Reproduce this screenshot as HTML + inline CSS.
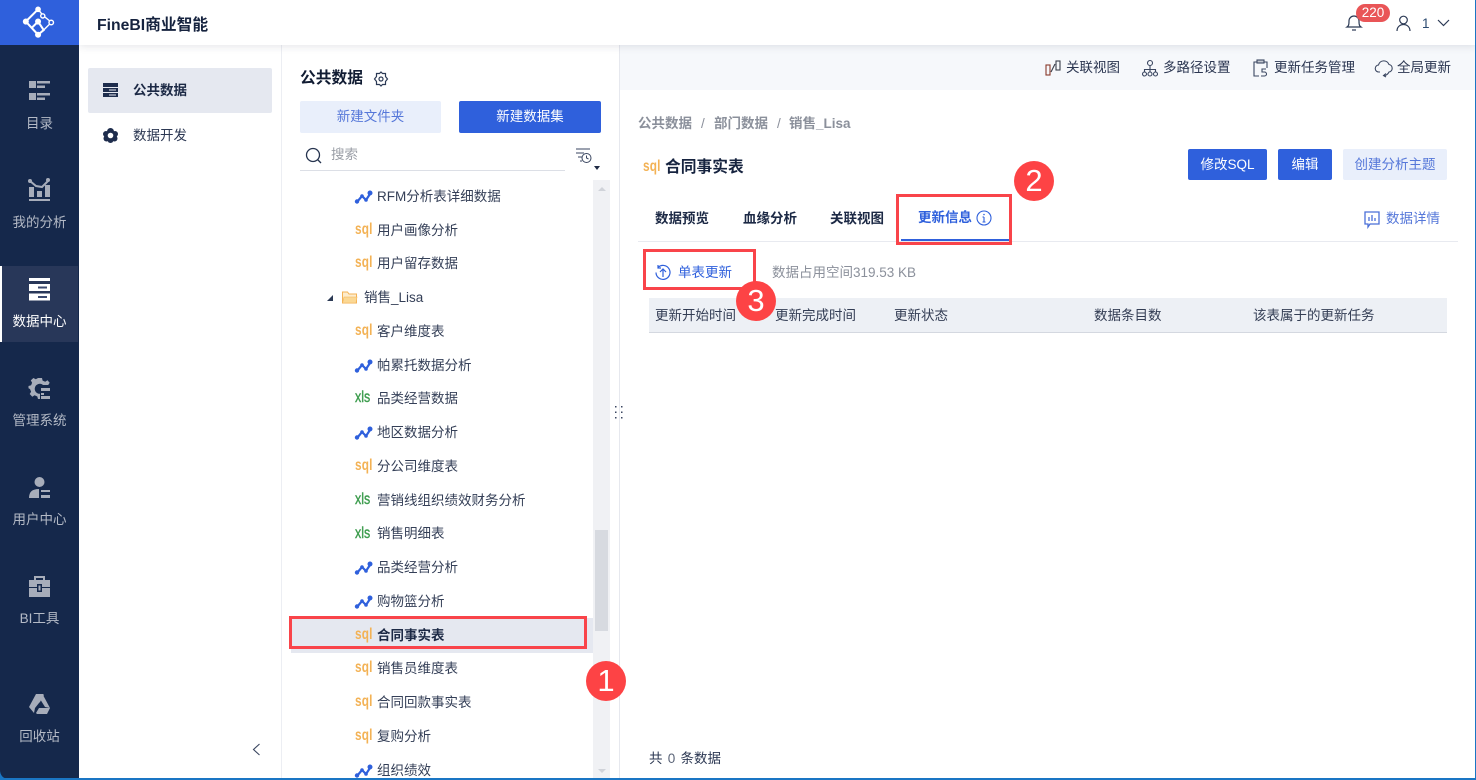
<!DOCTYPE html>
<html><head><meta charset="utf-8"><style>
*{box-sizing:border-box}
html,body{margin:0;padding:0;width:1476px;height:780px;overflow:hidden;background:#fff}
body{position:relative;font-family:"Liberation Sans","Noto Sans CJK SC",sans-serif;font-size:13.5px;color:#1f2a44}
.a{position:absolute}
.t{position:absolute;line-height:20px;height:20px;white-space:nowrap;margin-top:1px}
.b{font-weight:700}
.side{color:#b4bac6;width:79px;left:0;text-align:center}
.i{position:absolute;overflow:visible}
.sq,.xl{position:absolute;left:355px;height:14px;line-height:14px;font-weight:700;font-size:16px;white-space:nowrap;transform-origin:0 50%;margin-top:0}
.sq{color:#f3b255;transform:scaleX(.74);letter-spacing:.2px}
.xl{color:#3c9c4d;transform:scaleX(.8);font-weight:400;font-size:15.5px;-webkit-text-stroke:.4px #3c9c4d}
.row{position:absolute;left:377px;line-height:20px;height:20px;white-space:nowrap;color:#343f57;margin-top:1px}
.dot{position:absolute;width:40px;height:40px;border-radius:50%;background:#fd4345;color:#fff;font-size:31px;line-height:40px;text-align:center}
.box{position:absolute;border:3px solid #f9444a}
.btn{position:absolute;border-radius:2px;text-align:center;color:#fff;background:#2f60dc}
.lt{background:#e9effb;color:#5577d9}
</style></head><body>

<div class="a" style="left:79px;top:0;width:1397px;height:45px;background:#fff;box-shadow:0 1px 8px rgba(30,40,70,.13);z-index:3"></div>
<div class="a" style="left:0;top:0;width:79px;height:780px;background:#15284b;z-index:4"></div>
<div class="a" style="left:0;top:0;width:79px;height:45px;background:#2f60dc;z-index:5"></div>

<svg class="i" style="left:23px;top:6px;z-index:6" width="32" height="33" viewBox="0 0 34 34">
<path d="M16 3L3 16 16 30M16 16L9 23M16 16l6 9-6 5" fill="none" stroke="#fff" stroke-width="2.200"/>
<circle cx="16" cy="3" r="3" fill="#fff"/><circle cx="3" cy="16" r="3.200" fill="#fff"/><circle cx="16" cy="30" r="3.200" fill="#fff"/><circle cx="16" cy="16" r="3.200" fill="#fff"/>
<circle cx="21" cy="10" r="2.200" fill="#2f60dc" stroke="#fff" stroke-width="1.500"/><circle cx="30" cy="17" r="2.400" fill="#2f60dc" stroke="#fff" stroke-width="1.500"/><path d="M17 4l3 4M23 11l5 4M28 19l-6 6" stroke="#fff" stroke-width="1.500"/>
</svg>

<div style="position:absolute;left:0;top:0;width:79px;height:780px;z-index:6">
<div class="a" style="left:0;top:266px;width:78px;height:76px;background:#283759"></div>
<div class="a" style="left:0;top:266px;width:2px;height:76px;background:#fff"></div>

<svg class="i" style="left:28px;top:80px" width="23" height="22" viewBox="0 0 23 22" fill="#a7adba"><rect x="1" y="1" width="7" height="7"/><rect x="1" y="13" width="7" height="7"/><rect x="9" y="1" width="13" height="2.500"/><rect x="9" y="5.500" width="8" height="2.500"/><rect x="9" y="13" width="13" height="2.500"/><rect x="9" y="17.500" width="8" height="2.500"/></svg>
<div class="t side" style="top:113px">目录</div>

<svg class="i" style="left:28px;top:178px" width="23" height="24" viewBox="0 0 23 24" fill="#a7adba"><path d="M2 3l6 5 6 1 7-7" fill="none" stroke="#a7adba" stroke-width="2"/><circle cx="2" cy="3" r="2"/><circle cx="20" cy="2" r="2"/><rect x="1" y="9" width="5" height="10"/><rect x="9" y="13" width="5" height="6"/><rect x="17" y="7" width="5" height="12"/><rect x="1" y="21" width="21" height="2"/></svg>
<div class="t side" style="top:212px">我的分析</div>

<svg class="i" style="left:28px;top:277px" width="23" height="24" viewBox="0 0 23 24"><rect x="1" y="1" width="21" height="3" fill="#fff"/><rect x="1" y="7" width="21" height="7" fill="#fff"/><rect x="1" y="16.500" width="21" height="7" fill="#fff"/><rect x="10" y="9.500" width="9" height="2" fill="#3b4a70"/><rect x="10" y="19" width="9" height="2" fill="#3b4a70"/></svg>
<div class="t side" style="top:311px;color:#fff">数据中心</div>

<svg class="i" style="left:28px;top:377px" width="23" height="23" viewBox="0 0 23 23" fill="#a7adba"><path d="M10 1h4l.6 2.600 2.600 1.100 2.300-1.400 2.200 2.500-1.500 2.200H15a5 5 0 1 0-3 8.800V22h-2l-.7-2.500-2.700-1.200-2.300 1.400-2.600-2.700 1.400-2.300L2 12 .5 11.200 .5 9l2.600-.7 1-2.500-1.300-2.400L5.400 1l2.400 1.300z"/><rect x="13" y="11" width="9" height="3"/><rect x="13" y="16" width="3" height="2"/><rect x="13" y="19" width="9" height="3"/></svg>
<div class="t side" style="top:410px">管理系统</div>

<svg class="i" style="left:28px;top:476px" width="23" height="23" viewBox="0 0 23 23" fill="#a7adba"><circle cx="11.500" cy="6" r="5"/><path d="M1 22c0-6 3-9 10-9v9z"/><rect x="13" y="14" width="9" height="2"/><rect x="13" y="19" width="9" height="3"/></svg>
<div class="t side" style="top:509px">用户中心</div>

<svg class="i" style="left:28px;top:575px" width="23" height="23" viewBox="0 0 23 23" fill="#a7adba"><path d="M7 5V2h9v3" fill="none" stroke="#a7adba" stroke-width="2"/><rect x="1" y="5" width="21" height="7"/><rect x="1" y="13" width="21" height="9"/><rect x="9" y="9" width="5" height="8" fill="#15284b"/><rect x="10.500" y="10.500" width="2" height="5" fill="#a7adba"/></svg>
<div class="t side" style="top:608px">BI工具</div>

<svg class="i" style="left:28px;top:693px" width="23" height="22" viewBox="0 0 23 22" fill="#a7adba"><path d="M8 1h7l1 1-4 7-1 1-4 5-1 5-5-6z"/><path d="M15 2l7 13-5-1-5-8z"/><path d="M8 20l3-5h11l-3 6H9z"/></svg>
<div class="t side" style="top:726px">回收站</div>
</div>

<div class="t b" style="left:97px;top:15px;font-size:15.75px;height:20px;color:#16233f;z-index:6">FineBI商业智能</div>

<svg class="i" style="left:1345px;top:14px;z-index:6" width="18" height="18" viewBox="0 0 18 18"><path d="M2 13c1.500-1 2-2 2-6a5 5 0 0 1 10 0c0 4 .5 5 2 6z" fill="none" stroke="#2c3a55" stroke-width="1.200"/><path d="M7 16h4" stroke="#2c3a55" stroke-width="1.200"/></svg>
<div class="a" style="left:1356px;top:4px;width:34px;height:18px;border-radius:9px;background:#e95557;color:#fff;line-height:17px;text-align:center;font-size:13.5px;z-index:7">220</div>
<svg class="i" style="left:1396px;top:15px;z-index:6" width="15" height="17" viewBox="0 0 15 17" fill="none" stroke="#2c3a55" stroke-width="1.200"><circle cx="7.500" cy="5" r="3.800"/><path d="M1 16c0-4 3-6.500 6.500-6.500S14 12 14 16"/></svg>
<div class="t" style="left:1422px;top:13px;color:#2c4a70;z-index:6">1</div>
<svg class="i" style="left:1437px;top:19px;z-index:6" width="13" height="8" viewBox="0 0 13 8" fill="none" stroke="#2c3a55" stroke-width="1.200"><path d="M1 1l5.500 5.500L12 1"/></svg>

<div class="a" style="left:88px;top:68px;width:184px;height:45px;background:#e5e8f0;border-radius:2px"></div>
<svg class="i" style="left:103px;top:83px" width="15" height="14" viewBox="0 0 15 14"><rect width="15" height="4" fill="#1e2d4d"/><rect y="5" width="15" height="4" fill="#1e2d4d"/><rect y="10" width="15" height="4" fill="#1e2d4d"/><rect x="6" y="6.500" width="7" height="1" fill="#e5e8f0"/><rect x="6" y="11.500" width="7" height="1" fill="#e5e8f0"/></svg>
<div class="t b" style="left:133px;top:80px;color:#1c2945">公共数据</div>
<svg class="i" style="left:103px;top:128px" width="15" height="15" viewBox="0 0 15 15"><circle cx="7.500" cy="3.500" r="3.500" fill="#1e2d4d"/><circle cx="3" cy="6" r="3" fill="#1e2d4d"/><circle cx="12" cy="6" r="3" fill="#1e2d4d"/><circle cx="3.500" cy="10.500" r="3" fill="#1e2d4d"/><circle cx="11.500" cy="10.500" r="3" fill="#1e2d4d"/><circle cx="7.500" cy="12" r="3" fill="#1e2d4d"/><circle cx="7.500" cy="7.500" r="2.800" fill="#fff"/></svg>
<div class="t" style="left:133px;top:125px;color:#2c3853">数据开发</div>
<svg class="i" style="left:252px;top:743px" width="9" height="13" viewBox="0 0 9 13" fill="none" stroke="#3a4660" stroke-width="1.100"><path d="M7.500 1L1.500 6.500 7.500 12"/></svg>
<div class="a" style="left:281px;top:45px;width:1px;height:735px;background:#eceef3"></div>

<div class="t b" style="left:300px;top:68px;font-size:15.75px;color:#111c33">公共数据</div>
<svg class="i" style="left:373px;top:71px" width="16" height="16" viewBox="0 0 16 16" fill="none" stroke="#2c3a55" stroke-width="1.200"><path d="M8 1l1.500 1.500h3v3L14.500 8l-2 2.500v3h-3L8 15l-1.500-1.500h-3v-3L1.500 8l2-2.500v-3h3z"/><circle cx="8" cy="8" r="2"/></svg>
<div class="btn lt" style="left:300px;top:101px;width:141px;height:32px;line-height:31px">新建文件夹</div>
<div class="btn" style="left:459px;top:101px;width:142px;height:32px;line-height:31px">新建数据集</div>
<svg class="i" style="left:305px;top:147px" width="17" height="17" viewBox="0 0 17 17" fill="none" stroke="#26344f" stroke-width="1.300"><circle cx="8" cy="8" r="6.500"/><path d="M12.500 12.500l3.500 3.500"/></svg>
<div class="t" style="left:331px;top:144px;color:#9a9ea6">搜索</div>
<div class="a" style="left:300px;top:170px;width:265px;height:1px;background:#dcdfe6"></div>
<svg class="i" style="left:575px;top:147px" width="18" height="18" viewBox="0 0 18 18" fill="none" stroke="#3a4660" stroke-width="1"><path d="M1 2h14M1 6h8M3 10h4M5 14h2"/><circle cx="11.500" cy="11" r="4.500"/><path d="M11.500 8.500V11l2 1"/></svg>
<div class="a" style="left:594px;top:166px;border-left:3px solid transparent;border-right:3px solid transparent;border-top:4px solid #1f2a44"></div>

<div class="a" style="left:593px;top:180px;width:17px;height:600px;background:#f0f1f4"></div>
<div class="a" style="left:595px;top:530px;width:13px;height:101px;background:#d7dae0"></div>
<div class="a" style="left:598px;top:187px;border-left:4px solid transparent;border-right:4px solid transparent;border-bottom:4px solid #d0d3d9"></div>
<div class="a" style="left:598px;top:769px;border-left:4px solid transparent;border-right:4px solid transparent;border-top:4px solid #d0d3d9"></div>

<svg width="0" height="0" style="position:absolute"><defs><g id="ln"><path d="M2 12l5-6 4 4 4-6" fill="none" stroke="#2f60dc" stroke-width="2.200"/><circle cx="2" cy="11.500" r="2.200" fill="#2f60dc"/><circle cx="7" cy="6" r="1.800" fill="#2f60dc"/><circle cx="11" cy="10" r="1.800" fill="#2f60dc"/><circle cx="15" cy="3" r="2.500" fill="#2f60dc"/></g></defs></svg>

<svg class="i" style="left:355px;top:190px" width="17" height="14"><use href="#ln"/></svg><div class="row" style="top:186px">RFM分析表详细数据</div>
<div class="sq" style="top:223px">sql</div><div class="row" style="top:220px">用户画像分析</div>
<div class="sq" style="top:256px">sql</div><div class="row" style="top:253px">用户留存数据</div>
<div class="a" style="left:327px;top:295px;border-left:6px solid transparent;border-bottom:6px solid #2c3a55"></div>
<svg class="i" style="left:342px;top:291px" width="15" height="13" viewBox="0 0 15 13"><path d="M.5 12V1h5l1.500 2h7.500v9z" fill="#fdeccd" stroke="#f3b255"/><path d="M.5 12l1.500-6h13l-1 6z" fill="#fbd894" stroke="#f3b255" stroke-width=".6"/></svg>
<div class="row" style="left:364px;top:287px">销售_Lisa</div>
<div class="sq" style="top:324px">sql</div><div class="row" style="top:321px">客户维度表</div>
<svg class="i" style="left:355px;top:359px" width="17" height="14"><use href="#ln"/></svg><div class="row" style="top:355px">帕累托数据分析</div>
<div class="xl" style="top:391px">xls</div><div class="row" style="top:388px">品类经营数据</div>
<svg class="i" style="left:355px;top:426px" width="17" height="14"><use href="#ln"/></svg><div class="row" style="top:422px">地区数据分析</div>
<div class="sq" style="top:459px">sql</div><div class="row" style="top:456px">分公司维度表</div>
<div class="xl" style="top:493px">xls</div><div class="row" style="top:490px">营销线组织绩效财务分析</div>
<div class="xl" style="top:527px">xls</div><div class="row" style="top:523px">销售明细表</div>
<svg class="i" style="left:355px;top:561px" width="17" height="14"><use href="#ln"/></svg><div class="row" style="top:557px">品类经营分析</div>
<svg class="i" style="left:355px;top:595px" width="17" height="14"><use href="#ln"/></svg><div class="row" style="top:591px">购物篮分析</div>
<div class="a" style="left:291px;top:618px;width:302px;height:35px;background:#e5e8f0"></div>
<div class="sq" style="top:628px">sql</div><div class="row b" style="top:625px;color:#1c2945">合同事实表</div>
<div class="sq" style="top:661px">sql</div><div class="row" style="top:658px">销售员维度表</div>
<div class="sq" style="top:695px">sql</div><div class="row" style="top:692px">合同回款事实表</div>
<div class="sq" style="top:729px">sql</div><div class="row" style="top:726px">复购分析</div>
<svg class="i" style="left:355px;top:764px" width="17" height="14"><use href="#ln"/></svg><div class="row" style="top:760px">组织绩效</div>
<div class="box" style="left:289px;top:616px;width:298px;height:33px"></div>

<div class="a" style="left:619px;top:45px;width:1px;height:735px;background:#e6e8ee"></div>
<div class="a" style="left:620px;top:45px;width:856px;height:45px;background:#f6f8fb"></div>
<svg class="i" style="left:615px;top:405px" width="9" height="15" fill="#3a4660"><rect x="0" y="1" width="1.500" height="1.500"/><rect x="6" y="1" width="1.500" height="1.500"/><rect x="0" y="6.500" width="1.500" height="1.500"/><rect x="6" y="6.500" width="1.500" height="1.500"/><rect x="0" y="12" width="1.500" height="1.500"/><rect x="6" y="12" width="1.500" height="1.500"/></svg>

<svg class="i" style="left:1045px;top:60px" width="16" height="16" viewBox="0 0 16 16" fill="none" stroke="#3a3f4c" stroke-width="1.100"><rect x="1" y="5" width="4" height="10" stroke="#8a3a2a"/><rect x="11" y="1" width="4" height="9"/><path d="M6 12l4-8"/></svg>
<div class="t" style="left:1066px;top:57px;color:#2a3550">关联视图</div>
<svg class="i" style="left:1142px;top:60px" width="16" height="17" viewBox="0 0 16 17" fill="none" stroke="#3a4660" stroke-width="1.100"><circle cx="8" cy="3" r="2.500"/><path d="M8 6v3M2.500 12V9.500h11V12M8 9v3"/><circle cx="2.500" cy="14" r="2"/><circle cx="8" cy="14" r="2"/><circle cx="13.500" cy="14" r="2"/></svg>
<div class="t" style="left:1163px;top:57px;color:#2a3550">多路径设置</div>
<svg class="i" style="left:1253px;top:59px" width="15" height="18" viewBox="0 0 15 18" fill="none" stroke="#3a4660" stroke-width="1.100"><path d="M4 3H1v14h5M11 3h3v6"/><rect x="4" y="1" width="7" height="3" fill="#c5c9d2"/><path d="M13 10H9v3h2.500a2 2 0 0 1 0 4H8"/></svg>
<div class="t" style="left:1274px;top:57px;color:#2a3550">更新任务管理</div>
<svg class="i" style="left:1375px;top:59px" width="18" height="18" viewBox="0 0 18 18" fill="none" stroke="#3a4660" stroke-width="1.100"><path d="M5 13H4a3.500 3.500 0 0 1-.5-7A5.500 5.500 0 0 1 14 5.500a3.800 3.800 0 0 1 0 7.500c-1 2-3 3.500-5 3.500"/><path d="M11 14.500L8.500 16.500 11 18"/></svg>
<div class="t" style="left:1397px;top:57px;color:#2a3550">全局更新</div>

<div class="t" style="left:638px;top:113px;color:#8b909b;font-weight:700">公共数据</div>
<div class="t" style="left:701px;top:113px;color:#8b909b">/</div>
<div class="t" style="left:714px;top:113px;color:#8b909b;font-weight:700">部门数据</div>
<div class="t" style="left:777px;top:113px;color:#8b909b">/</div>
<div class="t" style="left:789px;top:113px;color:#8b909b;font-weight:700">销售_Lisa</div>

<div class="sq" style="left:643px;top:160px">sql</div>
<div class="t b" style="left:665px;top:157px;font-size:15.75px;color:#16233f">合同事实表</div>

<div class="btn" style="left:1188px;top:149px;width:79px;height:31px;line-height:31px">修改SQL</div>
<div class="btn" style="left:1278px;top:149px;width:54px;height:31px;line-height:31px">编辑</div>
<div class="btn lt" style="left:1343px;top:149px;width:104px;height:31px;line-height:31px">创建分析主题</div>

<div class="t b" style="left:655px;top:208px;color:#1c2945">数据预览</div>
<div class="t b" style="left:743px;top:208px;color:#1c2945">血缘分析</div>
<div class="t b" style="left:830px;top:208px;color:#1c2945">关联视图</div>
<div class="t b" style="left:918px;top:207px;color:#2f60dc">更新信息</div>
<svg class="i" style="left:976px;top:210px" width="16" height="16" viewBox="0 0 16 16" fill="none" stroke="#2f60dc" stroke-width="1.100"><circle cx="8" cy="8" r="7"/><path d="M8 7v5M6.500 7H8M6.500 12h3"/><circle cx="8" cy="4.500" r=".8" fill="#2f60dc" stroke="none"/></svg>
<div class="a" style="left:638px;top:241px;width:820px;height:1px;background:#e8eaf0"></div>
<div class="a" style="left:901px;top:239px;width:109px;height:2px;background:#2f60dc"></div>
<svg class="i" style="left:1364px;top:211px" width="16" height="17" viewBox="0 0 16 17" fill="none" stroke="#4a6fd8" stroke-width="1.300"><path d="M1 1h14v12H6l-2 3v-3H1z"/><path d="M5 10V6M8 10V4M11 10V7"/></svg>
<div class="t" style="left:1386px;top:208px;color:#5577d9">数据详情</div>
<div class="box" style="left:896px;top:194px;width:116px;height:51px"></div>

<svg class="i" style="left:655px;top:264px" width="16" height="17" viewBox="0 0 16 17" fill="none" stroke="#2f60dc" stroke-width="1.200"><path d="M3 3.500A7 7 0 1 1 1 8.500"/><path d="M3 1v3h3M8 13V5.500M5 8l3-3 3 3"/></svg>
<div class="t" style="left:678px;top:262px;color:#2f60dc">单表更新</div>
<div class="t" style="left:772px;top:262px;color:#8b909b">数据占用空间319.53 KB</div>
<div class="box" style="left:643px;top:249px;width:113px;height:41px"></div>

<div class="a" style="left:649px;top:298px;width:798px;height:35px;background:#edf0f5;border-bottom:1px solid #d4d8e0"></div>
<div class="t" style="left:655px;top:305px;color:#333d54">更新开始时间</div>
<div class="t" style="left:775px;top:305px;color:#333d54">更新完成时间</div>
<div class="t" style="left:894px;top:305px;color:#333d54">更新状态</div>
<div class="t" style="left:1094px;top:305px;color:#333d54">数据条目数</div>
<div class="t" style="left:1253px;top:305px;color:#333d54">该表属于的更新任务</div>
<div class="t" style="left:649px;top:748px;color:#2c3853;word-spacing:1.500px">共 <span style="color:#5b6478">0</span> 条数据</div>

<div class="dot" style="left:586px;top:661px;z-index:8">1</div>
<div class="dot" style="left:1014px;top:161px;z-index:8">2</div>
<div class="dot" style="left:736px;top:281px;z-index:8">3</div>

<div class="a" style="left:1475px;top:0;width:1px;height:780px;background:#1a76c4;z-index:9"></div>
<div class="a" style="left:0;top:778px;width:1476px;height:2px;background:#1a76c4;z-index:9"></div>
<svg class="i" style="left:0;top:770px;z-index:9" width="10" height="10"><path d="M0 0C0 5 3 9 9 9V10H0z" fill="#1a76c4"/></svg>
</body></html>
